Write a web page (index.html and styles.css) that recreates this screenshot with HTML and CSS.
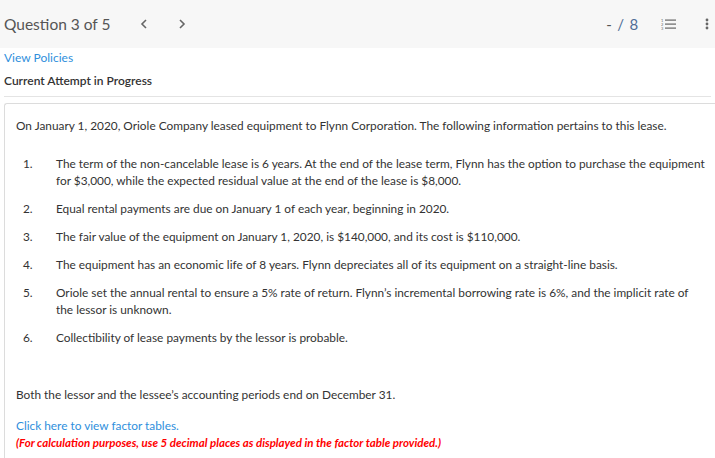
FILE: index.html
```html
<!DOCTYPE html>
<html>
<head>
<meta charset="utf-8">
<link rel="stylesheet" href="styles.css">
</head>
<body>
<header class="topbar">
  <div class="qnav">
    <span class="qtitle">Question 3 of 5</span>
    <span class="arrow first">
      <svg width="8" height="10" viewBox="0 0 8 10"><path d="M6 1 L2 5 L6 9" fill="none" stroke="#666" stroke-width="1.6"/></svg>
    </span>
    <span class="arrow">
      <svg width="8" height="10" viewBox="0 0 8 10"><path d="M2 1 L6 5 L2 9" fill="none" stroke="#666" stroke-width="1.6"/></svg>
    </span>
  </div>
  <div class="tools">
    <span class="score"><span class="dash">-</span> / 8</span>
    <span class="listicon">
      <svg width="16" height="12" viewBox="0 0 16 12">
        <text x="0" y="3.5" font-size="4" fill="#666" font-family="Lato, sans-serif">1</text>
        <text x="0" y="7.5" font-size="4" fill="#666" font-family="Lato, sans-serif">2</text>
        <text x="0" y="11.5" font-size="4" fill="#666" font-family="Lato, sans-serif">3</text>
        <rect x="4" y="1.5" width="11" height="1.2" fill="#666"/>
        <rect x="4" y="5.5" width="11" height="1.2" fill="#666"/>
        <rect x="4" y="9.5" width="11" height="1.2" fill="#666"/>
      </svg>
    </span>
    <span class="dots">
      <svg width="4" height="12" viewBox="0 0 4 12"><circle cx="2" cy="2" r="1.4" fill="#666"/><circle cx="2" cy="6" r="1.4" fill="#666"/><circle cx="2" cy="10" r="1.4" fill="#666"/></svg>
    </span>
  </div>
</header>
<div class="meta">
  <a class="policies">View Policies</a>
  <div class="attempt">Current Attempt in Progress</div>
</div>
<div class="card">
  <p class="intro">On January 1, 2020, Oriole Company leased equipment to Flynn Corporation. The following information pertains to this lease.</p>
  <ol class="items">
    <li><span class="num">1.</span><span class="txt">The term of the non-cancelable lease is 6 years. At the end of the lease term, Flynn has the option to purchase the equipment for $3,000, while the expected residual value at the end of the lease is $8,000.</span></li>
    <li><span class="num">2.</span><span class="txt">Equal rental payments are due on January 1 of each year, beginning in 2020.</span></li>
    <li><span class="num">3.</span><span class="txt">The fair value of the equipment on January 1, 2020, is $140,000, and its cost is $110,000.</span></li>
    <li><span class="num">4.</span><span class="txt">The equipment has an economic life of 8 years. Flynn depreciates all of its equipment on a straight-line basis.</span></li>
    <li><span class="num">5.</span><span class="txt">Oriole set the annual rental to ensure a 5% rate of return. Flynn’s incremental borrowing rate is 6%, and the implicit rate of the lessor is unknown.</span></li>
    <li><span class="num">6.</span><span class="txt">Collectibility of lease payments by the lessor is probable.</span></li>
  </ol>
  <p class="both">Both the lessor and the lessee’s accounting periods end on December 31.</p>
  <a class="factor">Click here to view factor tables.</a>
  <p class="calc">(For calculation purposes, use 5 decimal places as displayed in the factor table provided.)</p>
</div>
</body>
</html>
```
FILE: styles.css
```css
html, body { margin: 0; padding: 0; background: #fff; }
body {
  font-family: Lato, "Open Sans", sans-serif;
  color: #333;
  width: 715px;
  height: 458px;
  overflow: hidden;
  display: flex;
  flex-direction: column;
}

.topbar {
  height: 48px;
  flex: none;
  background: #f7f7f7;
  display: flex;
  align-items: center;
  justify-content: space-between;
  padding: 0 6px 0 4px;
}
.qnav { display: flex; align-items: center; }
.qtitle { font-size: 15.5px; color: #555; }
.arrow { display: flex; margin-left: 30px; }
.tools { display: flex; align-items: center; }
.score { font-size: 15px; color: #4f6d96; letter-spacing: 0.8px; margin-right: 22px; }
.dash { color: #555; }
.listicon { display: flex; margin-right: 28px; }
.dots { display: flex; }

.meta { padding: 2px 4px 0 4px; flex: none; }
.policies { display: block; font-size: 12px; color: #2f8fdc; line-height: 16px; }
.attempt { font-size: 12px; font-weight: 600; color: #333; margin-top: 7px; line-height: 16px; padding-bottom: 7px; border-bottom: 1px solid #e4e4e4; }

.card {
  flex: 1;
  min-height: 0;
  margin: 6px 0 0 4px;
  border: 1px solid #dcdcdc;
  border-right: none;
  border-bottom: none;
  border-radius: 3px 0 0 0;
  padding: 13px 0 0 11px;
  font-size: 11.85px;
  line-height: 17px;
  color: #333;
}
.intro { margin: 0 0 21px 0; }
.items { list-style: none; margin: 0; padding: 0; }
.items li { display: flex; margin-bottom: 11px; }
.num { width: 40px; padding-left: 7px; flex: none; box-sizing: border-box; }
.txt { flex: 1; padding-right: 9px; }
.both { margin: 40px 0 14px 0; }
.factor { display: block; color: #2f8fdc; }
.calc { margin: 0; color: #f00; font-size: 11.5px; font-style: italic; font-weight: bold; }
```
